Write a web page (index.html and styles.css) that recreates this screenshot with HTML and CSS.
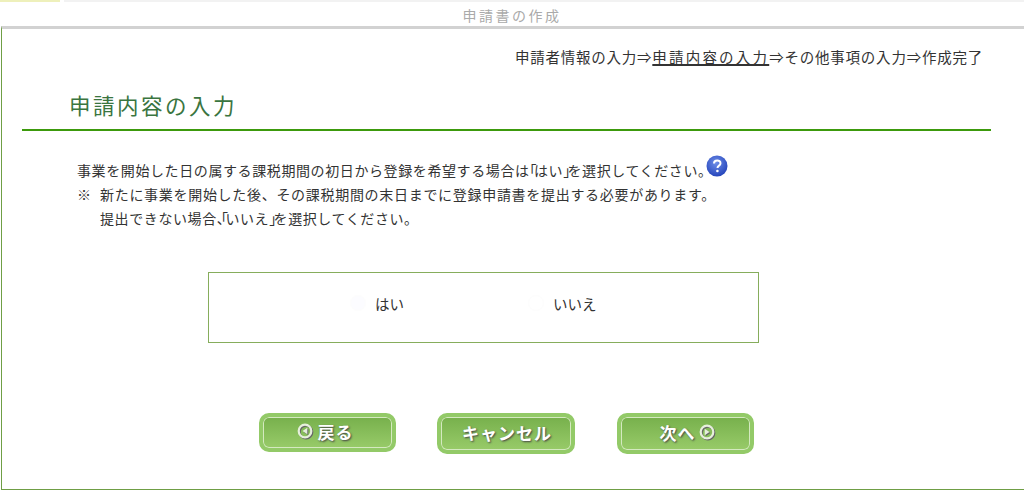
FILE: index.html
```html
<!DOCTYPE html>
<html lang="ja">
<head>
<meta charset="utf-8">
<title>申請書の作成</title>
<link rel="stylesheet" href="styles.css">
</head>
<body>
<div class="topstrip"><span class="strip-a"></span><span class="strip-b"></span></div>
<div class="titlebar">申請書の作成</div>
<main class="panel">
  <p class="steps">申請者情報の入力⇒<span class="current">申請内容の入力</span>⇒その他事項の入力⇒作成完了</p>
  <h1 class="heading">申請内容の入力</h1>
  <div class="desc">
    <p class="line"><span>事業を開始した日の属する課税期間の初日から登録を希望する場合は<span class="half">「</span>はい<span class="half">」</span>を選択してください。</span><svg class="help" viewBox="0 0 22 22" width="22" height="22"><defs><radialGradient id="hg" cx="45%" cy="35%" r="70%"><stop offset="0" stop-color="#6f8fe8"/><stop offset="1" stop-color="#1f3fb8"/></radialGradient></defs><circle cx="11" cy="11" r="10.500" fill="url(#hg)"/><path d="M8 8.500c0-4 6.500-4 6.500-.3 0 2.500-3 2.300-3 4.800" fill="none" stroke="#fff" stroke-width="2"/><circle cx="11.400" cy="16" r="1.300" fill="#fff"/></svg></p>
    <p class="line note"><span class="mark">※</span><span>新たに事業を開始した後、その課税期間の末日までに登録申請書を提出する必要があります。</span></p>
    <p class="line indent"><span>提出できない場合<span class="half">、「</span>いいえ<span class="half">」</span>を選択してください。</span></p>
  </div>
  <div class="choices">
    <label class="choice yes"><span class="radio checked"></span>はい</label>
    <label class="choice no"><span class="radio"></span>いいえ</label>
  </div>
  <div class="actions">
    <button class="btn btn-back" type="button"><svg class="arrow" viewBox="0 0 16 16" width="16" height="16"><circle cx="8" cy="8" r="6.300" fill="none" stroke="#e6efdc" stroke-width="2.200"/><path d="M10.300 4.800v6.400L5.500 8z" fill="#e6efdc"/></svg>戻る</button>
    <button class="btn btn-cancel" type="button">キャンセル</button>
    <button class="btn btn-next" type="button">次へ<svg class="arrow" viewBox="0 0 16 16" width="16" height="16"><circle cx="8" cy="8" r="6.300" fill="none" stroke="#e6efdc" stroke-width="2.200"/><path d="M5.700 4.800v6.400L10.500 8z" fill="#e6efdc"/></svg></button>
  </div>
</main>
</body>
</html>
```
FILE: styles.css
```css
html, body { margin: 0; padding: 0; background: #fff; }
body {
  width: 1024px;
  height: 491px;
  overflow: hidden;
  font-family: "Noto Sans CJK JP", "Liberation Sans", sans-serif;
  color: #333;
}
p, h1 { margin: 0; }
.topstrip { display: flex; height: 2px; }
.strip-a { width: 60px; background: #eef0bb; margin-right: 4px; }
.strip-b { flex: 1; background: #f2f2f2; }
.titlebar {
  height: 24px;
  line-height: 26px;
  text-align: center;
  font-size: 14px;
  letter-spacing: 2.500px;
  color: #aaa;
}
.panel {
  margin-left: 1px;
  height: 460px;
  border-top: 3px solid #d2d2d2;
  border-left: 1px solid #6f9e45;
  border-bottom: 1px solid #6f9e45;
}
.steps {
  padding: 18px 41px 0 0;
  text-align: right;
  font-size: 14.500px;
  letter-spacing: .77px;
  line-height: 20px;
}
.current { text-decoration: underline; text-decoration-thickness: 2px; letter-spacing: 2.200px; }
.heading {
  margin: 23px 33px 0 20px;
  padding: 0 0 9px 47px;
  border-bottom: 2px solid #3c9a0c;
  font-size: 21.500px;
  line-height: 30px;
  font-weight: 400;
  letter-spacing: 2.500px;
  color: #3a753f;
}
.desc { padding: 27px 0 0 75px; font-size: 14px; letter-spacing: .6px; }
.line { display: flex; align-items: center; height: 24px; }
.note { letter-spacing: .7px; }
.half { font-feature-settings: "halt"; letter-spacing: -2.700px; }
.help { margin: -8px 0 0 -7px; }
.mark { width: 23px; }
.indent { padding-left: 23px; }
.choices {
  display: flex;
  box-sizing: border-box;
  width: 551px;
  height: 71px;
  margin: 42px 0 0 206px;
  border: 1px solid #86ad5c;
  font-size: 14.500px;
  align-items: center;
  padding-bottom: 9px;
}
.choice { display: flex; align-items: center; }
.yes { margin-left: 141px; width: 178px; }
.radio { width: 16px; height: 16px; margin-right: 9px; border-radius: 50%; background: #fff; border: 1px solid #fdfdfd; box-sizing: border-box; }
.radio.checked { background: #fcfcff; }
.actions { display: flex; margin: 70px 0 0 257px; gap: 41px; align-items: flex-start; }
.btn {
  display: flex;
  align-items: center;
  justify-content: center;
  gap: 5px;
  box-sizing: border-box;
  width: 137px;
  height: 40px;
  padding: 0 0 3px;
  border: 4px solid #93ca68;
  border-radius: 10px;
  background: linear-gradient(#77b04c, #98cb69);
  box-shadow: inset 0 0 0 1px #d4e9c0;
  color: #fff;
  font: 700 17px "Noto Sans CJK JP", sans-serif;
  letter-spacing: 1px;
  text-shadow: 1px 1px 2px #444;
}
.btn-back { padding-right: 5px; height: 39px; }
.btn-cancel { width: 138px; height: 41px; margin-right: 1px; padding-left: 2px; }
.btn-next { height: 41px; padding-left: 3px; gap: 3px; }
.arrow { filter: drop-shadow(1px 1px 0 #666); }
```
